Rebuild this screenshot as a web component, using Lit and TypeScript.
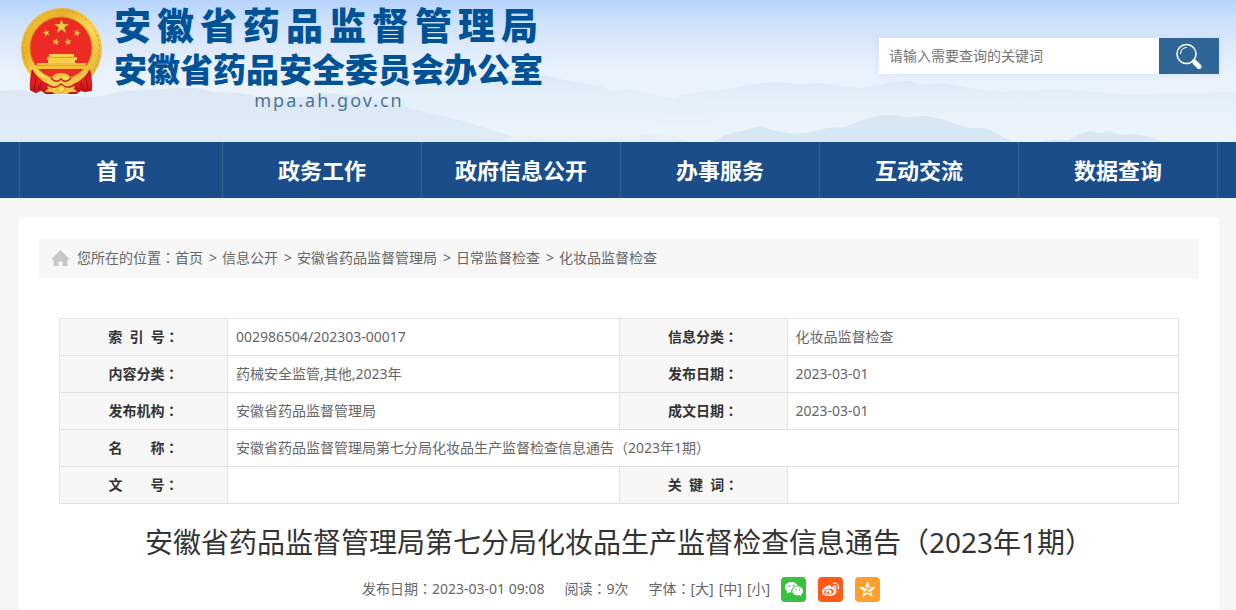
import { LitElement, html, svg, css } from "lit";
import { customElement, property } from "lit/decorators.js";

const FONT = css`"Noto Sans", "Noto Sans CJK SC", sans-serif`;
const CENTRED = css`"Noto Sans CJK TC", "Noto Sans CJK SC", sans-serif`;

/** Sets full-width colons and brackets in the middle of their cell. */
const zh = (text: string) =>
  text
    .split(/([：（）])/)
    .filter((part) => part !== "")
    .map((part) => (/[：（）]/.test(part) ? html`<span class="punct">${part}</span>` : part));

const starPoints = (cx: number, cy: number, r: number, turn = 0) =>
  Array.from({ length: 10 }, (_, i) => {
    const radius = i % 2 ? r * 0.4 : r;
    const angle = ((i * 36 + turn - 90) * Math.PI) / 180;
    return `${(cx + radius * Math.cos(angle)).toFixed(2)},${(cy + radius * Math.sin(angle)).toFixed(2)}`;
  }).join(" ");

const star = (cx: number, cy: number, r: number, turn = 0) =>
  svg`<polygon points=${starPoints(cx, cy, r, turn)} fill="#f3c64a" stroke="#b5651d" stroke-width="0.4"/>`;

const emblem = html`<svg class="emblem" viewBox="0 0 82 88" aria-hidden="true">
  <defs>
    <linearGradient id="gold" x1="0" y1="0" x2="1" y2="1">
      <stop offset="0" stop-color="#f6c93c" />
      <stop offset="0.3" stop-color="#e9b02a" />
      <stop offset="0.55" stop-color="#fbd95a" />
      <stop offset="1" stop-color="#e2a527" />
    </linearGradient>
    <linearGradient id="drape" x1="0" y1="0" x2="0" y2="1">
      <stop offset="0" stop-color="#b80f12" />
      <stop offset="0.5" stop-color="#e5231f" />
      <stop offset="1" stop-color="#bd1214" />
    </linearGradient>
  </defs>
  <path d="M12 61 L70 61 L72 83 L64 84 L59 82 L57 86 L25 86 L23 82 L16 85 L10 82Z" fill="url(#drape)" />
  <ellipse cx="41.500" cy="41" rx="40.500" ry="41" fill="url(#gold)" />
  <ellipse cx="41.500" cy="41" rx="38" ry="38.500" fill="none" stroke="#d79a1d" stroke-width="0.8" stroke-dasharray="3 2" />
  <ellipse cx="41" cy="40" rx="31" ry="31" fill="#ed2a24" stroke="#cf8d18" stroke-width="1" />
  ${star(41.5, 18.5, 8)} ${star(26.5, 25, 4, -15)} ${star(57, 25, 4, 15)}
  ${star(36, 34, 4, 10)} ${star(48, 34, 4, -10)}
  <path d="M29 46h25v3h3v3h-4v3h-22v-3h-4v-3h2Z" fill="#f9cf4c" />
  <path d="M29 49.500h25" stroke="#d4951f" stroke-width="0.8" />
  <path d="M28 52h27v3H28Z" fill="#f9cf4c" />
  <path d="M17 55h49v6H15v-4h2Z" fill="#f5c03a" />
  <path d="M16 57.500h50" stroke="#d99b22" stroke-width="0.700" />
  <path d="M11 61 Q20 72 31 71 Q34 64 41 65 Q48 64 51 71 Q62 72 71 61 L71 67 Q64 76 56 79 L26 79 Q16 75 11 67Z" fill="url(#gold)" />
  <path d="M12 61 Q9 73 10 82 L16 85 L19 81 L24 85 L29 76 Q18 72 12 61Z" fill="url(#drape)" />
  <path d="M70 61 Q73 73 72 82 L66 84 L63 81 L58 85 L53 76 Q64 72 70 61Z" fill="url(#drape)" />
  <path d="M16 70l-2 12M21 74l-2 8M66 70l2 12M61 74l2 8" stroke="#8f0c0f" stroke-width="0.8" />
  <path d="M25 84 Q30 76 41 79 Q52 76 57 84 L50 84 L47 86 L35 86 L32 84Z" fill="#f4c544" />
  <path d="M31 70 Q36 76 41 71 Q46 76 51 70 M28 77 Q35 82 41 76 Q47 82 54 77" fill="none" stroke="#c8231c" stroke-width="1.600" />
  <circle cx="41" cy="81" r="3.500" fill="#fbd85e" stroke="#c98c1a" stroke-width="0.600" />
</svg>`;

const landscape = html`<svg class="scene" viewBox="0 0 1236 142" preserveAspectRatio="none" aria-hidden="true">
  <defs>
    <linearGradient id="sky" x1="0" y1="0" x2="0" y2="1">
      <stop offset="0" stop-color="#b6d4fe" />
      <stop offset="0.12" stop-color="#c9dffd" />
      <stop offset="0.3" stop-color="#dce9fb" />
      <stop offset="0.5" stop-color="#e9f2fb" />
      <stop offset="1" stop-color="#edf3fa" />
    </linearGradient>
    <linearGradient id="haze" x1="0" y1="0" x2="0" y2="1">
      <stop offset="0" stop-color="#dce9f5" />
      <stop offset="1" stop-color="#dceaf4" stop-opacity="0.800" />
    </linearGradient>
    <linearGradient id="far" x1="0" y1="0" x2="0" y2="1">
      <stop offset="0" stop-color="#dceaf6" />
      <stop offset="1" stop-color="#e8f2fa" stop-opacity="0" />
    </linearGradient>
  </defs>
  <rect width="1236" height="142" fill="url(#sky)" />
  <path
    d="M320 112 L345 98 L360 92 L385 85 L410 80 L440 78 L480 79 L515 76 L545 75 L565 80 L600 86 L612 91 L628 89 L650 94 L680 99 L700 102 L740 142 L320 142Z"
    fill="url(#far)"
  />
  <path
    d="M640 130 L680 95 L735 88 L752 84 L775 82 L800 84 L820 83 L845 87 L862 88 L880 85 L893 82 L908 81 L920 84 L945 83 L970 88 L1000 92 L1060 89 L1130 95 L1236 92 L1236 130Z"
    fill="url(#far)"
  />
  <path
    d="M0 91 L20 90 L35 92 L60 95 L95 97 L125 91 L150 90 L175 88 L195 88 L215 92 L240 93 L270 99 L300 97 L330 93 L360 97 L400 106 L460 120 L530 142 L0 142Z"
    fill="url(#haze)"
  />
  <path d="M500 142 L515 136 L525 135 L535 138 L560 135 L572 137 L590 136 L600 139 L640 135 L660 134 L672 136 L690 142Z" fill="#e4eff8" />
  <path
    d="M713 142 L725 135 L745 130 L760 126 L772 130 L793 134 L810 132 L828 128 L845 127 L865 119 L882 115 L895 115 L906 117 L925 116 L942 119 L958 125 L970 128 L985 128 L998 134 L1012 142Z"
    fill="#d7e7f4"
  />
  <path d="M1040 142 L1055 139 L1068 140 L1080 134 L1090 131 L1100 133 L1110 131 L1120 135 L1135 134 L1152 137 L1162 142Z" fill="#dae8f4" />
</svg>`;

@customElement("site-header")
export class SiteHeader extends LitElement {
  static styles = css`
    :host {
      display: grid;
      font-family: ${FONT};
    }
    .scene {
      grid-area: 1 / 1;
      width: 100%;
      height: 100%;
      min-height: 0;
      contain: size;
    }
    .bar {
      grid-area: 1 / 1;
      position: relative;
      display: flex;
      justify-content: space-between;
      align-items: flex-start;
      padding: 0 17px 33px 20px;
    }
    .brand {
      display: flex;
      gap: 12px;
      color: #005297;
    }
    .emblem {
      width: 82px;
      height: 88px;
      padding-top: 8px;
    }
    .names {
      display: flex;
      flex-direction: column;
      font-family: "Liberation Sans", "Noto Sans CJK SC", sans-serif;
      font-weight: 900;
      white-space: nowrap;
      padding-top: 6px;
    }
    .names p {
      margin: 0;
    }
    .name {
      font-size: 37px;
      line-height: 44px;
      letter-spacing: 6px;
    }
    .office {
      font-size: 33px;
      line-height: 42px;
    }
    .names .domain {
      font-family: ${FONT};
      font-weight: 400;
      font-size: 18px;
      line-height: 17px;
      letter-spacing: 2px;
      text-align: center;
      color: #4a7399;
    }
    .search {
      display: flex;
      width: 340px;
      height: 36px;
      margin-top: 38px;
      box-shadow: 0 0 8px rgba(120, 150, 190, 0.15);
    }
    .search input {
      flex: 1;
      min-width: 0;
      box-sizing: border-box;
      border: 0;
      border-radius: 0;
      padding: 0 10px;
      background: #fff;
      color: #333;
      font: 14px/20px ${FONT};
    }
    .search input::placeholder {
      color: #757575;
    }
    .search button {
      width: 60px;
      padding: 0;
      border: 0;
      background: #2f6697;
      display: flex;
      align-items: center;
      justify-content: center;
    }
    .search svg {
      width: 26px;
      height: 26px;
    }
  `;

  render() {
    return html`
      ${landscape}
      <div class="bar">
        <div class="brand">
          ${emblem}
          <div class="names">
            <p class="name">安徽省药品监督管理局</p>
            <p class="office">安徽省药品安全委员会办公室</p>
            <p class="domain">mpa.ah.gov.cn</p>
          </div>
        </div>
        <form class="search" role="search" @submit=${(e: Event) => e.preventDefault()}>
          <input type="text" aria-label="请输入需要查询的关键词" placeholder="请输入需要查询的关键词" />
          <button type="submit" aria-label="搜索">
            <svg viewBox="0 0 26 26" fill="none" stroke="#fff" aria-hidden="true">
              <circle cx="10.500" cy="11" r="9.500" stroke-width="1.600" />
              <path d="M4.500 10.500a6.500 6.500 0 0 1 6-6" stroke-width="1.200" stroke-linecap="round" />
              <path d="M19 19.500l4 4" stroke-width="5" stroke-linecap="round" />
              <path d="M16.500 17l2.500 2.500" stroke-width="2.500" />
            </svg>
          </button>
        </form>
      </div>
    `;
  }
}

@customElement("site-nav")
export class SiteNav extends LitElement {
  static styles = css`
    :host {
      display: block;
      background: #1a4d8a;
      padding: 0 18px 0 19px;
      font-family: ${FONT};
    }
    .items {
      display: grid;
      grid-template-columns: 203fr repeat(5, 199fr);
      border-left: 1px solid #386794;
    }
    .item {
      border-right: 1px solid #386794;
      color: #fff;
      font-size: 22px;
      font-weight: 700;
      line-height: 56px;
      text-align: center;
      text-decoration: none;
      white-space: nowrap;
    }
  `;

  render() {
    return html`<nav class="items">
      ${["首 页", "政务工作", "政府信息公开", "办事服务", "互动交流", "数据查询"].map(
        (label) => html`<a class="item" href="#">${label}</a>`
      )}
    </nav>`;
  }
}

@customElement("bread-crumb")
export class BreadCrumb extends LitElement {
  static styles = css`
    :host {
      display: flex;
      align-items: center;
      padding: 0 12px;
      background: #f7f7f7;
      color: #666;
      font: 14px/40px ${FONT};
    }
    .home {
      width: 19px;
      height: 16px;
      margin-right: 7px;
    }
    .trail {
      display: flex;
      gap: 6px;
      margin: 0;
      padding: 0;
      list-style: none;
    }
    .step {
      display: flex;
      gap: 5px;
    }
    .step a {
      color: inherit;
      text-decoration: none;
    }
    .punct {
      font-family: ${CENTRED};
      line-height: 1;
    }
  `;

  @property({ attribute: false }) trail: string[] = [];

  render() {
    return html`
      <svg class="home" viewBox="0 0 19 16" aria-hidden="true">
        <path d="M9.500 0L19 9.500h-2.500V16h-5v-4.500h-4V16h-5V9.500H0Z" fill="#c8c8c8" />
      </svg>
      <span>${zh("您所在的位置：")}</span>
      <ol class="trail">
        ${this.trail.map(
          (step, i) => html`<li class="step">${i ? html`<span>&gt;</span>` : ""}<a href="#">${step}</a></li>`
        )}
      </ol>
    `;
  }
}

type Row = { label: string; value: string; label2?: string; value2?: string };

@customElement("info-table")
export class InfoTable extends LitElement {
  static styles = css`
    :host {
      display: block;
      font: 14px/20px ${FONT};
    }
    .table {
      width: 100%;
      border-collapse: collapse;
      table-layout: fixed;
    }
    .key {
      width: 168px;
    }
    th,
    td {
      box-sizing: border-box;
      height: 37px;
      padding: 0 8px;
      border: 1px solid #e2e2e2;
    }
    th {
      background: #f7f7f7;
      color: #333;
      font-weight: 700;
      text-align: center;
    }
    td {
      color: #666;
      text-align: left;
    }
    .punct {
      font-family: ${CENTRED};
      line-height: 1;
    }
  `;

  @property({ attribute: false }) rows: Row[] = [];

  render() {
    return html`<table class="table">
      <colgroup>
        <col class="key" />
        <col />
        <col class="key" />
        <col />
      </colgroup>
      <tbody>
        ${this.rows.map(
          (row) => html`<tr>
            <th scope="row">${zh(row.label)}</th>
            ${row.label2
              ? html`<td>${zh(row.value)}</td>
                  <th scope="row">${zh(row.label2)}</th>
                  <td>${zh(row.value2 ?? "")}</td>`
              : html`<td colspan="3">${zh(row.value)}</td>`}
          </tr>`
        )}
      </tbody>
    </table>`;
  }
}

const wechat = svg`
  <path fill="#fff" d="M10.500 5C6.900 5 4 7.400 4 10.300c0 1.700 0.900 3.100 2.400 4.100l-0.600 2 2.300-1.200c0.800 0.200 1.500 0.300 2.300 0.300-0.900-3.500 2.200-6.500 6.400-6.400C16.200 6.700 13.600 5 10.500 5Z"/>
  <path fill="#fff" d="M22 14c0-2.500-2.400-4.400-5.300-4.400s-5.300 1.900-5.300 4.400 2.400 4.400 5.300 4.400c0.700 0 1.300-0.100 1.900-0.300l1.900 1.100-0.500-1.800c1.300-0.800 2-2 2-3.400Z"/>
  <g fill="#3ac13f"><circle cx="8.400" cy="8.800" r="0.900"/><circle cx="12.700" cy="8.800" r="0.900"/><circle cx="15" cy="12.800" r="0.750"/><circle cx="18.600" cy="12.800" r="0.750"/></g>`;

const weibo = svg`
  <path fill="#fff" d="M10.800 8.300c1.500-0.600 2.600 0 2.200 1.900 2.200-0.800 4-0.400 3.400 1.600 1.500 0.500 2.300 1.400 2.200 2.700-0.200 2.500-3.500 4.600-7.400 4.600S4 17.300 4 14.700c0-2.600 3.900-5.500 6.800-6.400Z"/>
  <ellipse cx="10.900" cy="14.800" rx="4.900" ry="3.200" fill="#ff5a19" transform="rotate(-8 10.900 14.800)"/>
  <ellipse cx="10.600" cy="15" rx="3" ry="2.600" fill="#fff"/>
  <circle cx="10" cy="15.400" r="1.200" fill="#ff5a19"/>
  <path d="M15.600 8.900c1.700-0.300 2.700 0.900 2.300 2.500M15.500 6.200c3.400-0.600 5.700 2 4.900 5.300" fill="none" stroke="#fff" stroke-width="1.300" stroke-linecap="round"/>`;

const qzone = svg`
  <polygon points=${starPoints(12.5, 13, 8)} fill="#fff" stroke="#fff" stroke-width="1" stroke-linejoin="round"/>
  <path d="M9 10.800h6.500l-5.500 4.400h6.500" fill="none" stroke="#ff9f2e" stroke-width="1.200"/>`;

@customElement("article-meta")
export class ArticleMeta extends LitElement {
  static styles = css`
    :host {
      display: flex;
      justify-content: center;
      align-items: center;
      gap: 20px;
      padding-left: 4px;
      color: #666;
      font: 14px/26px ${FONT};
    }
    .sizes,
    .share {
      display: flex;
      align-items: center;
    }
    .size {
      margin: 0 5px 0 0;
      padding: 0;
      border: 0;
      background: none;
      color: inherit;
      font: inherit;
    }
    .sizes {
      margin-right: -14px;
    }
    .share {
      gap: 12px;
    }
    .icon {
      display: flex;
      width: 25px;
      height: 25px;
      border-radius: 4px;
    }
    .wechat {
      background: #3ac13f;
    }
    .weibo {
      background: #ff5a19;
    }
    .qzone {
      background: #ff9f2e;
    }
    .punct {
      font-family: ${CENTRED};
      line-height: 1;
    }
  `;

  render() {
    return html`
      <span>${zh("发布日期：2023-03-01 09:08")}</span>
      <span>${zh("阅读：9次")}</span>
      <span class="sizes">
        <span>${zh("字体：")}</span>
        ${["[大]", "[中]", "[小]"].map((s) => html`<button class="size" type="button">${s}</button>`)}
      </span>
      <span class="share">
        <a class="icon wechat" href="#" aria-label="微信"><svg viewBox="0 0 25 25">${wechat}</svg></a>
        <a class="icon weibo" href="#" aria-label="微博"><svg viewBox="0 0 25 25">${weibo}</svg></a>
        <a class="icon qzone" href="#" aria-label="QQ空间"><svg viewBox="0 0 25 25">${qzone}</svg></a>
      </span>
    `;
  }
}

@customElement("app-root")
export class AppRoot extends LitElement {
  static styles = css`
    :host {
      display: block;
      min-height: 100vh;
      background: #f7f7f7;
      font-family: ${FONT};
    }
    .page {
      padding: 20px 17px 0 19px;
    }
    .card {
      background: #fff;
      padding: 20px 20px 8px;
    }
    .info {
      margin: 40px 20px 0;
    }
    .title {
      margin: 18px 0 14px;
      color: #333;
      font-size: 28px;
      font-weight: 400;
      line-height: 40px;
      text-align: center;
    }
    .punct {
      font-family: ${CENTRED};
      line-height: 1;
    }
  `;

  private trail = ["首页", "信息公开", "安徽省药品监督管理局", "日常监督检查", "化妆品监督检查"];

  private rows: Row[] = [
    { label: "索\u00a0\u00a0引\u00a0\u00a0号：", value: "002986504/202303-00017", label2: "信息分类：", value2: "化妆品监督检查" },
    { label: "内容分类：", value: "药械安全监管,其他,2023年", label2: "发布日期：", value2: "2023-03-01" },
    { label: "发布机构：", value: "安徽省药品监督管理局", label2: "成文日期：", value2: "2023-03-01" },
    { label: "名\u3000\u3000称：", value: "安徽省药品监督管理局第七分局化妆品生产监督检查信息通告（2023年1期）" },
    { label: "文\u3000\u3000号：", value: "", label2: "关\u00a0\u00a0键\u00a0\u00a0词：", value2: "" },
  ];

  render() {
    return html`
      <site-header></site-header>
      <site-nav></site-nav>
      <main class="page">
        <article class="card">
          <bread-crumb .trail=${this.trail}></bread-crumb>
          <info-table class="info" .rows=${this.rows}></info-table>
          <h1 class="title">${zh("安徽省药品监督管理局第七分局化妆品生产监督检查信息通告（2023年1期）")}</h1>
          <article-meta></article-meta>
        </article>
      </main>
    `;
  }
}
